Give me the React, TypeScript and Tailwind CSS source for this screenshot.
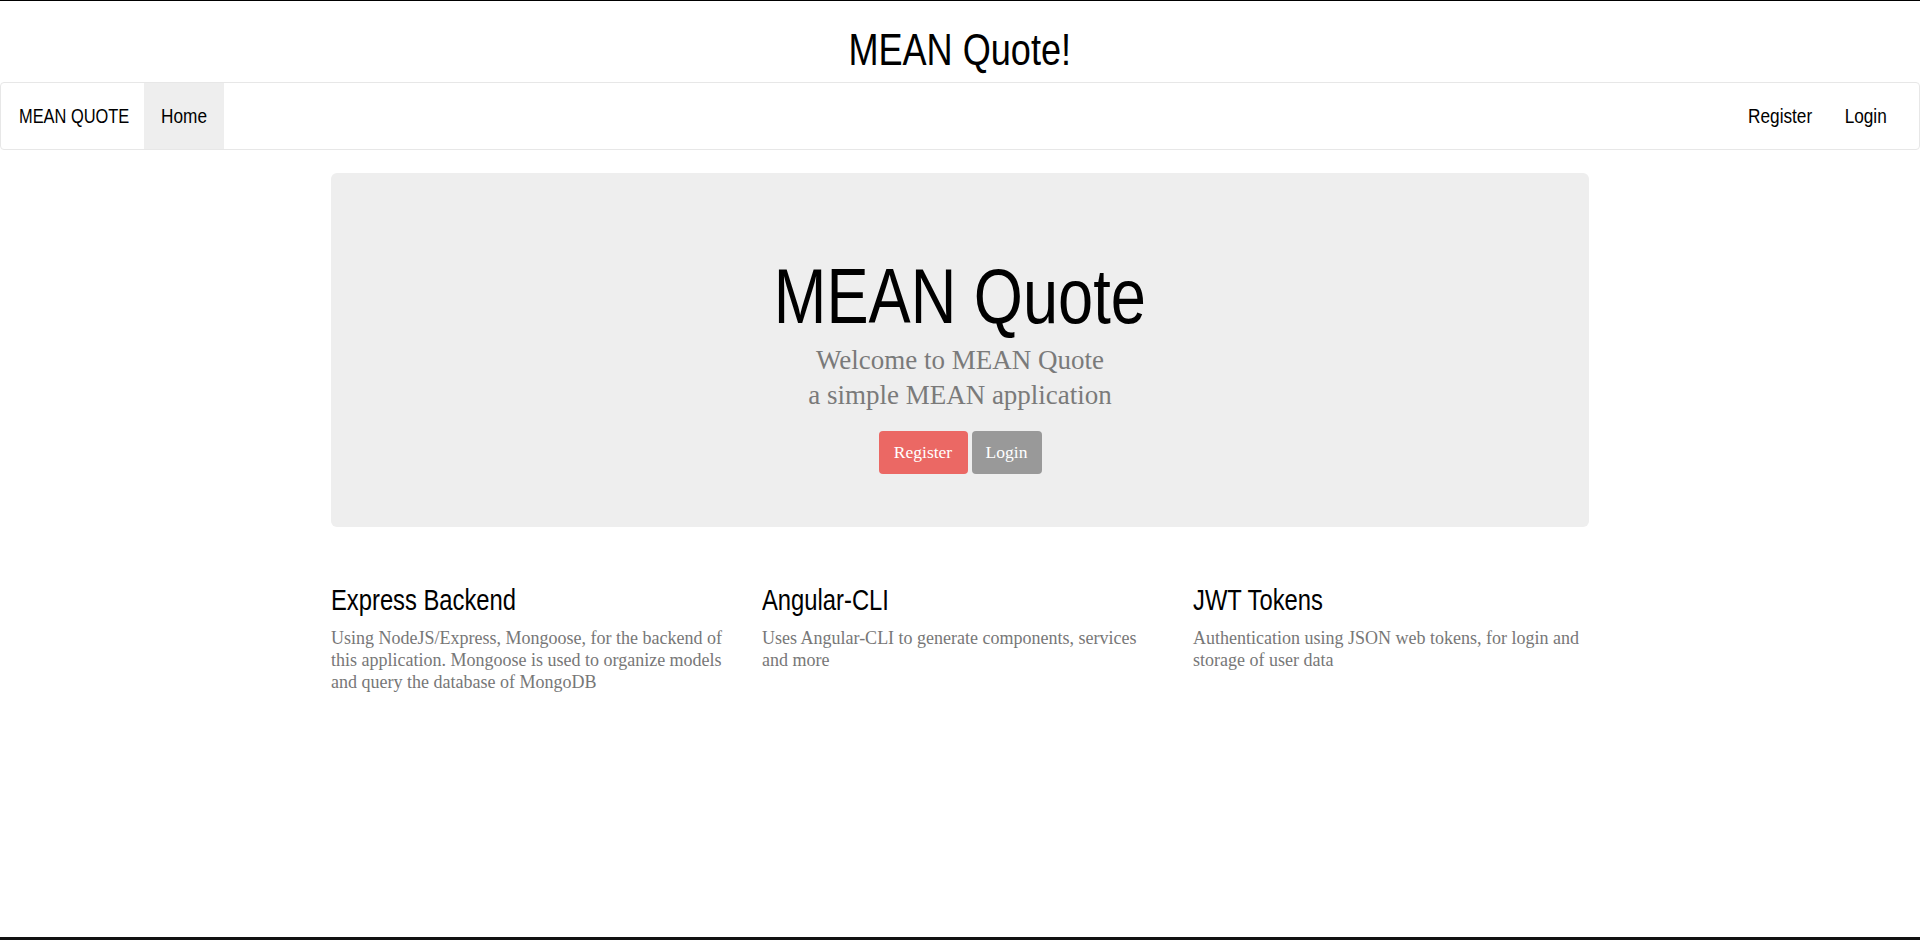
const sans = "font-['Liberation_Sans',Arial,sans-serif]";
const serif = "font-['Liberation_Serif','Times_New_Roman',serif]";

// News Cycle is a condensed face; Liberation Sans squeezed to Arial Narrow widths stands in
function Narrow({ children, left }: { children: React.ReactNode; left?: boolean }) {
  return (
    <span className={`inline-block whitespace-nowrap scale-x-[0.82] ${left ? "origin-left" : "origin-center"}`}>
      {children}
    </span>
  );
}

type FeatureProps = {
  title: string;
  text: string;
};

function Feature({ title, text }: FeatureProps) {
  return (
    <div className="w-[396px]">
      <h3 className={`${sans} text-[29px] leading-[32px] text-black`}>
        <Narrow left>{title}</Narrow>
      </h3>
      <p className={`${serif} mt-[11px] text-[18px] leading-[22px] text-[#777]`}>{text}</p>
    </div>
  );
}

function NavLink({ label, width, active }: { label: string; width: string; active?: boolean }) {
  return (
    <a className={`flex items-center justify-center ${width} ${active ? "bg-[#eee]" : ""}`}>
      <Narrow>{label}</Narrow>
    </a>
  );
}

function Navbar() {
  return (
    <nav className={`${sans} flex h-[68px] items-stretch rounded-[4px] border border-[#e7e7e7] bg-white text-[21px] leading-[66px] text-black`}>
      <a className="w-[143px] pl-[18px] text-[20px]">
        <Narrow left>MEAN QUOTE</Narrow>
      </a>
      <NavLink label="Home" width="w-[80px]" active />
      <div className="ml-auto mr-[15px] flex">
        <NavLink label="Register" width="w-[96px]" />
        <NavLink label="Login" width="w-[76px]" />
      </div>
    </nav>
  );
}

function Jumbotron() {
  return (
    <div className="mx-auto flex w-[1258px] flex-col items-center rounded-[6px] bg-[#eee] pt-[85px] pb-[53px]">
      <h1 className={`${sans} text-[77px] leading-[77px] text-black`}>
        <Narrow>MEAN Quote</Narrow>
      </h1>
      <p className={`${serif} mt-[8px] text-center text-[27px] leading-[35px] text-[#7a7a7a]`}>
        Welcome to MEAN Quote
        <br />a simple MEAN application
      </p>
      <div className={`${serif} mt-[18px] flex gap-[4px] text-[17.5px] text-white`}>
        <button className="h-[43px] w-[89px] rounded-[4px] bg-[#eb6864]">Register</button>
        <button className="h-[43px] w-[70px] rounded-[4px] bg-[#999]">Login</button>
      </div>
    </div>
  );
}

export default function App() {
  return (
    <div className="flex h-[940px] flex-col border-t border-black bg-white">
      <h1 className={`${sans} mt-[27px] text-center text-[44px] leading-[44px] text-black`}>
        <Narrow>MEAN Quote!</Narrow>
      </h1>
      <div className="mt-[10px]">
        <Navbar />
      </div>
      <main className="mt-[23px]">
        <Jumbotron />
        <div className="mx-auto mt-[57px] flex w-[1258px] gap-[35px]">
          <Feature
            title="Express Backend"
            text="Using NodeJS/Express, Mongoose, for the backend of this application. Mongoose is used to organize models and query the database of MongoDB"
          />
          <Feature
            title="Angular-CLI"
            text="Uses Angular-CLI to generate components, services and more"
          />
          <Feature
            title="JWT Tokens"
            text="Authentication using JSON web tokens, for login and storage of user data"
          />
        </div>
      </main>
      <div className="mt-auto h-[3px] bg-[#111]" />
    </div>
  );
}
